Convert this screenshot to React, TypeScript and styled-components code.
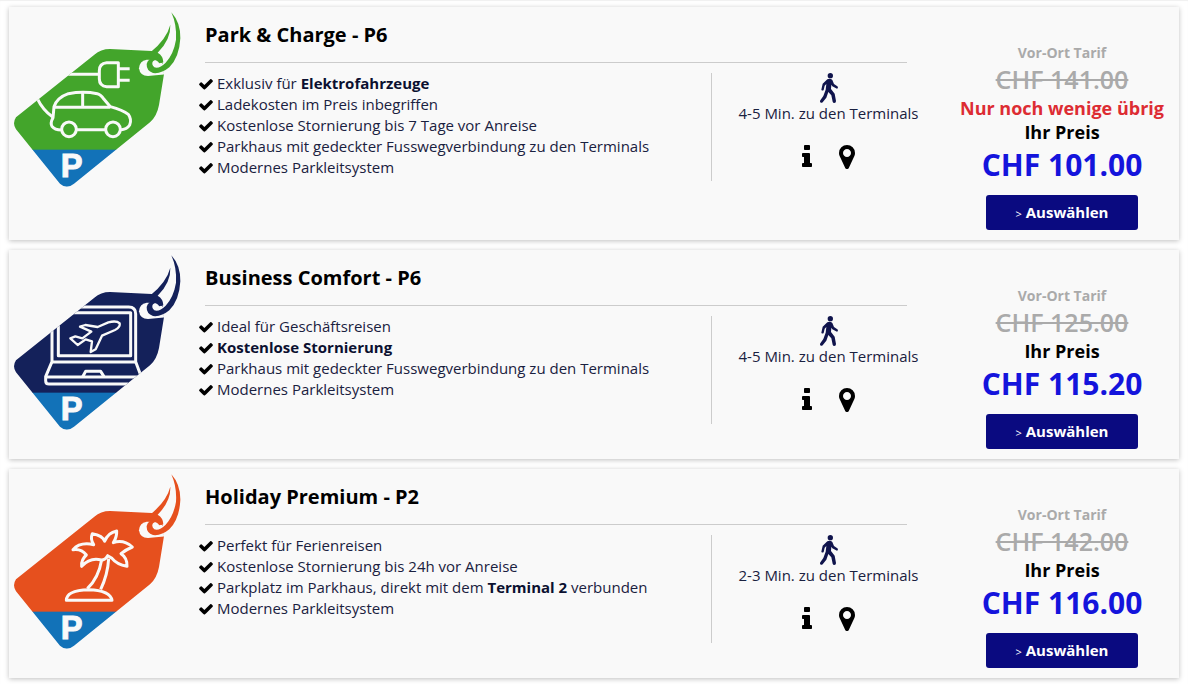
import React from "react";
import styled, { createGlobalStyle } from "styled-components";

const GlobalStyle = createGlobalStyle`
  * { box-sizing: border-box; }
  body {
    margin: 0;
    background: #ffffff;
    color: #1a2140;
    font-family: "Open Sans", "Noto Sans", sans-serif;
    font-size: 15px;
    line-height: 21px;
  }
`;

const OfferList = styled.main`
  display: flex;
  flex-direction: column;
  gap: 10px;
  padding: 7px 9px 6px;
  box-shadow: inset 0 1px 1px #f0f0f0;
`;

const Card = styled.article`
  display: grid;
  grid-template-columns: 196px minmax(0, 1fr) 20%;
  background: #f9f9f9;
  box-shadow: 0 1px 5px rgba(0, 0, 0, 0.25);
`;

const TagCell = styled.div`
  padding: 5px 0 0 4px;
`;

const TagSvg = styled.svg`
  display: block;
  width: 168px;
  height: 176px;
`;

const Main = styled.div`
  display: flex;
  flex-direction: column;
`;

const Title = styled.h2`
  margin: 0 38px 10px 0;
  padding: 14px 0 13px;
  border-bottom: 1px solid #cccccc;
  color: #000000;
  font-size: 20px;
  font-weight: 700;
  line-height: 28px;
`;

const Details = styled.div`
  display: flex;
`;

const Features = styled.ul`
  flex: 1;
  margin: 0 0 0 -7px;
  padding: 0;
  list-style: none;
`;

const Feature = styled.li`
  display: flex;
  align-items: center;
  gap: 3px;
  height: 21px;
  white-space: nowrap;

  b {
    color: #0b1030;
  }
`;

const Glyph = styled.svg<{ $size: number }>`
  display: block;
  flex: none;
  width: ${(p) => p.$size}px;
  height: ${(p) => p.$size}px;
  fill: currentColor;
`;

const Walk = styled.div`
  display: flex;
  flex-direction: column;
  align-items: center;
  width: 234px;
  height: 108px;
  border-left: 1px solid #cccccc;
  white-space: nowrap;
`;

const WalkIcon = styled.svg`
  display: block;
  width: 20px;
  height: 30px;
  fill: #10144c;
`;

const Links = styled.div`
  display: flex;
  gap: 12px;
  margin-top: 19px;
  padding-right: 4px;
`;

const IconLink = styled.a`
  display: block;
  color: #000000;
`;

const Pricing = styled.div`
  display: flex;
  flex-direction: column;
  align-items: center;
  padding: 36px 0 10px;
  font-weight: 700;
  white-space: nowrap;
`;

const RateLabel = styled.span`
  color: #aaaaaa;
  font-size: 14px;
  line-height: 20px;
`;

const OldPrice = styled.s`
  color: #aaaaaa;
  font-size: 25px;
  font-weight: 600;
  line-height: 33px;
`;

const PriceNote = styled.span<{ $urgent?: boolean }>`
  color: ${(p) => (p.$urgent ? "#dd2c33" : "#000000")};
  font-size: 18px;
  line-height: 24px;
`;

const Price = styled.strong`
  margin-bottom: 10px;
  color: #1414dc;
  font-size: 30px;
  font-weight: 700;
  line-height: 41px;
`;

const SelectButton = styled.button`
  width: 152px;
  height: 35px;
  padding: 0 0 2px;
  border: 0;
  border-radius: 3px;
  background: #0a0a80;
  color: #ffffff;
  font-family: inherit;
  font-size: 15px;
  font-weight: 700;
  cursor: pointer;
`;

const Chevron = styled.span`
  font-size: 11px;
  font-weight: 400;
`;

const CHECK =
  "M1671 566q0 40-28 68l-724 724-136 136q-28 28-68 28t-68-28l-136-136-362-362q-28-28-28-68t28-68l136-136q28-28 68-28t68 28l294 295 656-657q28-28 68-28t68 28l136 136q28 28 28 68z";
const INFO =
  "M1216 1344v128q0 26-19 45t-45 19h-512q-26 0-45-19t-19-45v-128q0-26 19-45t45-19h64v-384h-64q-26 0-45-19t-19-45v-128q0-26 19-45t45-19h384q26 0 45 19t19 45v576h64q26 0 45 19t19 45zm-128-1152v192q0 26-19 45t-45 19h-256q-26 0-45-19t-19-45v-192q0-26 19-45t45-19h256q26 0 45 19t19 45z";
const MARKER =
  "M1152 640q0-106-75-181t-181-75-181 75-75 181 75 181 181 75 181-75 75-181zm256 0q0 109-33 179l-364 774q-16 33-47.5 52t-67.5 19-67.5-19-46.5-52l-365-774q-33-70-33-179 0-212 150-362t362-150 362 150 150 362z";

const TAG_SHAPE =
  "M330 147 L455 153 Q490 156 492 222 L477 315 Q471 348 450 367 L222 551 Q200 569 180 551 L48 388 Q36 370 48 352 L283 164 Q302 147 330 147Z";

function CarArt() {
  return (
    <g fill="none" stroke="#f9f9f9" strokeWidth="9" strokeLinejoin="round">
      <path d="M200 223H298" />
      <path d="M355 188H320Q298 190 298 212V236Q298 258 320 260H355Z" />
      <path d="M357 206H389M357 241H389" />
      <path d="M112 296Q128 330 159 352" />
      <path d="M184 390Q164 390 156 379Q150 369 159 353L162 320Q171 293 205 281Q250 273 292 281Q302 283 312 298L331 320Q368 330 385 343Q396 358 389 375Q381 388 361 390" />
      <path d="M162 322H331M248 279V322M231 389H317" />
      <circle cx="207" cy="388" r="22" />
      <circle cx="339" cy="388" r="22" />
    </g>
  );
}

function LaptopArt() {
  return (
    <g fill="none" stroke="#f9f9f9" strokeWidth="9" strokeLinejoin="round" transform="translate(0 6)">
      <path d="M230 186H386Q407 186 407 207V350L421 388" />
      <path d="M212 203H392V332H175V235" />
      <path d="M156 250V350L137 395V407Q137 417 147 417H385" />
      <path d="M156 351H407M139 396H412" />
      <path d="M248 395L257 379H302L312 395" />
      <path
        strokeWidth="7"
        d="M211 280L226 274L247 280L274 260L240 245L256 240L293 246L325 232Q350 226 359 235Q362 247 345 255L306 272L287 313L272 321L276 289L257 283L233 300Z"
      />
    </g>
  );
}

function PalmArt() {
  return (
    <g fill="none" stroke="#f9f9f9" strokeWidth="9" strokeLinejoin="round" transform="translate(0 9)">
      <path d="M305 284Q296 338 262 371M326 281Q323 330 302 373" />
      <path d="M199 406Q199 376 266 374Q331 376 336 406Z" />
      <path d="M304 285Q270 276 245 304Q243 284 259 270Q244 250 219 254Q240 230 281 239Q270 223 277 206Q308 211 314 229Q324 203 350 198Q351 216 340 233Q370 222 397 246Q378 254 363 266Q382 278 381 304Q350 298 336 280L323 272Q316 285 304 285Z" />
    </g>
  );
}

type Motif = "car" | "laptop" | "palm";

function PriceTag({ color, motif }: { color: string; motif: Motif }) {
  const clip = `tag-${motif}`;
  return (
    <TagSvg viewBox="39 36 504 528" aria-hidden="true">
      <clipPath id={clip}>
        <path d={TAG_SHAPE} />
      </clipPath>
      <g clipPath={`url(#${clip})`}>
        <rect x="39" y="140" width="504" height="310" fill={color} />
        <rect x="39" y="449" width="504" height="120" fill="#1272b8" />
        {motif === "car" && <CarArt />}
        {motif === "laptop" && <LaptopArt />}
        {motif === "palm" && <PalmArt />}
        <path d="M440 179Q418 183 417 205Q420 228 444 228Q470 226 498 223V196L470 180Z" fill="#f9f9f9" />
      </g>
      <path d="M448 160Q500 118 511 74Q513 118 473 158Q490 168 490 187L478 190Q470 178 452 177Z" fill={color} />
      <path
        d="M514 37Q542 68 541 115Q538 172 508 202Q484 222 459 219Q439 212 440 192Q444 176 462 174Q478 174 483 184Q468 176 459 184Q453 193 463 202Q478 207 497 188Q521 162 528 119Q531 75 514 37Z"
        fill={color}
      />
      <text
        x="182"
        y="532"
        fill="#f9f9f9"
        stroke="#f9f9f9"
        strokeWidth="3"
        fontFamily="Liberation Sans, Arial, sans-serif"
        fontSize="98"
        fontWeight="700"
      >
        P
      </text>
    </TagSvg>
  );
}

interface Offer {
  title: string;
  color: string;
  motif: Motif;
  features: React.ReactNode[];
  walk: string;
  oldPrice: string;
  price: string;
  scarce?: boolean;
}

const offers: Offer[] = [
  {
    title: "Park & Charge - P6",
    color: "#43a52b",
    motif: "car",
    features: [
      <>Exklusiv für <b>Elektrofahrzeuge</b></>,
      "Ladekosten im Preis inbegriffen",
      "Kostenlose Stornierung bis 7 Tage vor Anreise",
      "Parkhaus mit gedeckter Fusswegverbindung zu den Terminals",
      "Modernes Parkleitsystem",
    ],
    walk: "4-5 Min. zu den Terminals",
    oldPrice: "CHF 141.00",
    price: "CHF 101.00",
    scarce: true,
  },
  {
    title: "Business Comfort - P6",
    color: "#14215a",
    motif: "laptop",
    features: [
      "Ideal für Geschäftsreisen",
      <b>Kostenlose Stornierung</b>,
      "Parkhaus mit gedeckter Fusswegverbindung zu den Terminals",
      "Modernes Parkleitsystem",
    ],
    walk: "4-5 Min. zu den Terminals",
    oldPrice: "CHF 125.00",
    price: "CHF 115.20",
  },
  {
    title: "Holiday Premium - P2",
    color: "#e6501e",
    motif: "palm",
    features: [
      "Perfekt für Ferienreisen",
      "Kostenlose Stornierung bis 24h vor Anreise",
      <>Parkplatz im Parkhaus, direkt mit dem <b>Terminal 2</b> verbunden</>,
      "Modernes Parkleitsystem",
    ],
    walk: "2-3 Min. zu den Terminals",
    oldPrice: "CHF 142.00",
    price: "CHF 116.00",
  },
];

function OfferCard({ offer }: { offer: Offer }) {
  return (
    <Card>
      <TagCell>
        <PriceTag color={offer.color} motif={offer.motif} />
      </TagCell>
      <Main>
        <Title>{offer.title}</Title>
        <Details>
          <Features>
            {offer.features.map((feature, i) => (
              <Feature key={i}>
                <Glyph $size={16} viewBox="0 0 1792 1792" color="#000000" aria-hidden="true">
                  <path d={CHECK} />
                </Glyph>
                <span>{feature}</span>
              </Feature>
            ))}
          </Features>
          <Walk>
            <WalkIcon viewBox="0 0 60 90" aria-hidden="true">
              <circle cx="34" cy="8" r="8" />
              <path d="M25 19Q34 15 40 21L45 33L55 40Q59 44 54 47L40 40L37 35L36 48L47 62L51 84Q51 90 46 90Q42 90 41 86L37 67L28 57L22 74L11 88Q7 91 4 88Q2 85 4 82L13 69L20 50L22 33L17 38L14 51Q10 55 7 50L11 32Z" />
            </WalkIcon>
            <span>{offer.walk}</span>
            <Links>
              <IconLink href="#info" aria-label="Informationen">
                <Glyph $size={28} viewBox="0 0 1792 1792"><path d={INFO} /></Glyph>
              </IconLink>
              <IconLink href="#karte" aria-label="Standort">
                <Glyph $size={28} viewBox="0 0 1792 1792"><path d={MARKER} /></Glyph>
              </IconLink>
            </Links>
          </Walk>
        </Details>
      </Main>
      <Pricing>
        <RateLabel>Vor-Ort Tarif</RateLabel>
        <OldPrice>{offer.oldPrice}</OldPrice>
        {offer.scarce && <PriceNote $urgent>Nur noch wenige übrig</PriceNote>}
        <PriceNote>Ihr Preis</PriceNote>
        <Price>{offer.price}</Price>
        <SelectButton type="button">
          <Chevron>&gt;</Chevron> Auswählen
        </SelectButton>
      </Pricing>
    </Card>
  );
}

export default function App() {
  return (
    <>
      <GlobalStyle />
      <OfferList>
        {offers.map((offer) => (
          <OfferCard key={offer.title} offer={offer} />
        ))}
      </OfferList>
    </>
  );
}
